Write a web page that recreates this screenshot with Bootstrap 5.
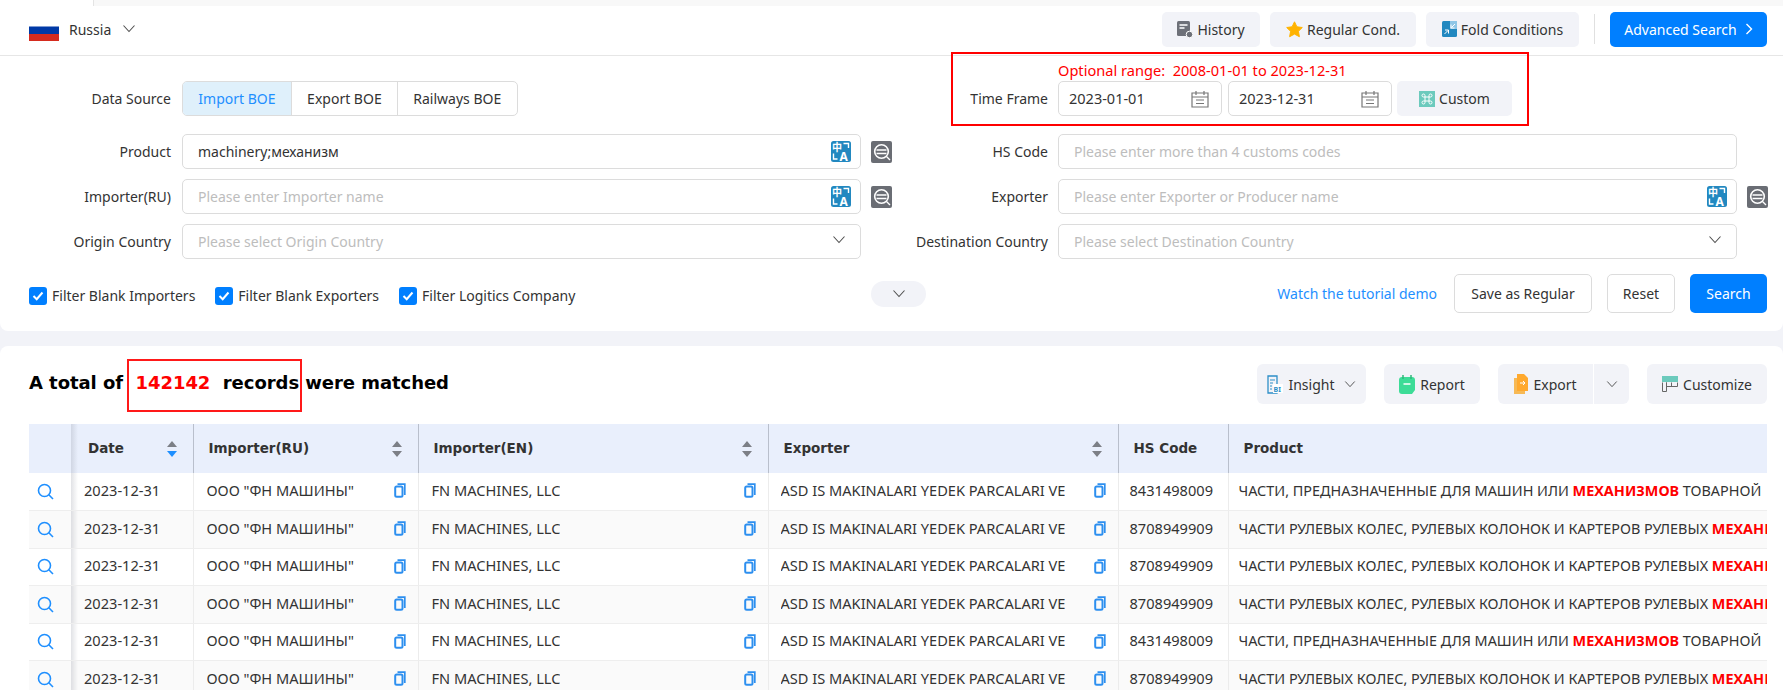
<!DOCTYPE html>
<html lang="en"><head><meta charset="utf-8"><title>Search</title>
<link rel="stylesheet" href="https://cdn.jsdelivr.net/npm/bootstrap@5.3.0/dist/css/bootstrap.min.css">
<style>
html,body{height:690px;overflow:hidden}
body{background:#f2f3f8;font-family:"Noto Sans","Noto Sans CJK SC",sans-serif;font-size:14px;color:#333}
.page-clip{height:690px;overflow:hidden}
.top-strip{height:6px;background:#f8f8f8;margin-left:93px;border-left:1px solid #e4e4e4}
.top-wrap{background:#fff}
.filter-panel{background:#fff;border-radius:0 0 8px 8px;height:331px}
.head-bar{height:50px;border-bottom:1px solid #e6e6e6;padding:0 16px 3px 29px;position:relative}
.flag{width:30px;height:22px;margin-top:1px;flex:none}
.place-name{margin:0 11px 0 10px}
.head-actions{display:flex;align-items:center;gap:10px}
.soft-btn{height:35px;background:#f2f3f8;border:0;border-radius:5px;font-size:14px;color:#333;padding:0;display:inline-flex;align-items:center;justify-content:center;gap:4px}
.w-hist{width:98px}.w-reg{width:146px}.w-fold{width:153px}
.sep-v{width:1px;height:30px;background:#e0e0e0;margin:0 5px}
.adv-btn{width:157px;height:35px;background:#007fff;color:#fff;border:0;border-radius:5px;font-size:14px;display:inline-flex;align-items:center;justify-content:center;gap:8px}
.form-line{display:flex;align-items:flex-end;padding-left:29px;margin-bottom:10px}
.form-first{padding-top:4px;margin-bottom:18px}
.lbl-l{width:142px;text-align:right;margin-right:11px;line-height:35px;flex:none}
.lbl-r{width:156px;text-align:right;margin-right:10px;line-height:35px;flex:none}
.ctl-l{width:679px;flex:none}.ctl-r{width:679px;flex:none}
.fake-input{height:35px;border:1px solid #dcdcdc;border-radius:5px;background:#fff;display:flex;align-items:center;justify-content:space-between;padding:0 9px 0 15px}
.sel-input{padding-right:14px}
.sel-input svg{margin-bottom:3px}
.ph{color:#bdbdbd}
.seg-wrap{display:inline-flex;height:35px;border:1px solid #dcdcdc;border-radius:5px;overflow:hidden}
.seg-item{display:flex;align-items:center;padding:0 15.3px;border-left:1px solid #dcdcdc}
.seg-item:first-child{border-left:0;background:#dff0fb;color:#1e8fff}
.ico-side{width:21px;height:22px;margin-left:10px;flex:none;display:block;align-self:center}
.spacer-side{width:31px;flex:none}
.range-note{color:#f00;line-height:20px;margin-bottom:1px;white-space:pre;font-size:14.6px}
.date-box{width:164px;height:35px;border:1px solid #dcdcdc;border-radius:5px;display:flex;align-items:center;justify-content:space-between;padding:0 12px 0 10px;font-size:14.5px}
.date-box+.date-box{margin-left:6px;padding-left:10px}
.custom-btn{width:115px;margin-left:5px;font-size:14px}
.red-box{position:absolute;left:951px;top:52px;width:578px;height:74px;border:2px solid #f00;pointer-events:none}
.check-row{display:flex;align-items:center;padding:7px 16px 0 29px;height:46px}
.tick{width:18px;height:18px;background:#007fff;border-radius:3px;display:flex;align-items:center;justify-content:center;flex:none;margin-right:5px}
.tick-lab{margin-right:20px}
.fold-pill{position:absolute;left:871px;width:55px;height:26px;background:#f2f3f8;border-radius:13px;display:flex;align-items:center;justify-content:center;margin-bottom:4px}
.tut-link{color:#1e8fff;text-decoration:none;margin-right:17px}
.line-btn{height:39px;border:1px solid #dcdcdc;background:#fff;border-radius:5px;font-size:14px;color:#333;padding:0;margin-right:15px}
.w-save{width:138px}.w-reset{width:68px}
.go-btn{width:77px;height:39px;background:#007fff;color:#fff;border:0;border-radius:5px;font-size:14px}
.result-panel{background:#fff;margin-top:15px;border-radius:8px 8px 0 0;height:344px;padding:13px 16px 0 29px;overflow:hidden}
.res-head{height:65px;position:relative}
.res-title{font-family:"DejaVu Sans",sans-serif;font-weight:700;font-size:18px;color:#000;white-space:pre;margin:13px 0 0;letter-spacing:-.05px}
.num-red{color:#f00}
.anno-box{position:absolute;left:98px;top:0;width:175px;height:53px;border:2px solid #f00;pointer-events:none;opacity:.9}
.tool-group{display:flex;gap:18px;padding-top:5px}
.tool-btn{height:40px;background:#f2f3f8;border:0;border-radius:6px;font-size:14px;color:#333;display:inline-flex;align-items:center;justify-content:center;gap:5px;padding:0}
.w-ins{width:109px}.w-rep{width:96px}.w-exp{width:95px;border-radius:6px 0 0 6px}.w-car{width:35px;margin-left:1px;border-radius:0 6px 6px 0}.w-cus{width:120px}
.data-tbl{table-layout:fixed;width:1738px;border-collapse:collapse;margin:0}
.data-tbl th{height:49px;background:#e9effc;font-family:"DejaVu Sans",sans-serif;font-size:13.5px;font-weight:700;color:#333;padding:0 15px;border-left:1px solid #b9bfcc;vertical-align:middle;white-space:nowrap}
.data-tbl th:first-child,.data-tbl td:first-child{border-left:0;padding:0}
.data-tbl th:nth-child(2){padding-left:17px}
.data-tbl th:nth-child(2),.data-tbl td:nth-child(2){border-left:0;background-image:linear-gradient(90deg,rgba(120,125,140,.22),rgba(120,125,140,0) 7px)}
.data-tbl td{height:37.5px;padding:0 12px 1px 13px;border-left:1px solid #ececec;border-bottom:1px solid #eee;white-space:nowrap;overflow:hidden;vertical-align:middle;font-size:14.6px;color:#333}
.data-tbl td.cell-hs{padding-left:11px}
.data-tbl td.cell-prod{padding:0 0 1px 10px;font-size:14.4px}
.data-tbl td.cell-exp{padding-left:12px}
.data-tbl tbody tr:nth-child(even) td{background-color:#fafafa}
.th-in{display:flex;align-items:center;justify-content:space-between}
.td-in{display:flex;align-items:center;justify-content:space-between;gap:6px}
.td-txt{overflow:hidden;white-space:nowrap}
.hit{color:#f00;font-weight:700}
.sort-ico{width:12px;height:18px;flex:none}
.mag-cell{display:flex;justify-content:flex-start;padding-left:8px}
</style></head>
<body>
<svg width="0" height="0" class="position-absolute">
<defs>
<symbol id="cal" viewBox="0 0 18 18"><path d="M1 3h16v14H1zM1 7h16M5 1v4M13 1v4M5 10h8M5 13.500h8" fill="none" stroke="#777" stroke-width="1.200"/></symbol>
<symbol id="chev" viewBox="0 0 14 10"><path d="M1.500 1.500 7 7.500l5.500-6" fill="none" stroke="#4f4f4f" stroke-width="1.100"/></symbol>
<symbol id="trans" viewBox="0 0 20 21"><rect width="20" height="21" rx="2.500" fill="#2288c0"/><text x="1" y="10" font-size="10" font-weight="700" fill="#fff" font-family="Noto Sans CJK SC">中</text><text x="8.500" y="19.500" font-size="12" font-weight="700" fill="#fff" font-family="Noto Sans">A</text><path d="M12.500 2.500h5v4.500M2.500 12.500v5.500h4" fill="none" stroke="#fff" stroke-width="1.400"/></symbol>
<symbol id="sq" viewBox="0 0 21 22"><rect width="21" height="22" rx="2" fill="#6a6d74"/><circle cx="10.500" cy="10.500" r="6.800" fill="none" stroke="#fff" stroke-width="1.600"/><path d="M5.500 9h10M5.500 12.500h10M15.500 15.500l3.500 3.500" stroke="#fff" stroke-width="1.400" fill="none"/></symbol>
<symbol id="copy" viewBox="0 0 12 15"><path d="M3.500 1.200h7.300V12" fill="none" stroke="#2d8fef" stroke-width="1.700"/><rect x="1.200" y="3.500" width="7.300" height="10.300" rx="1.500" fill="none" stroke="#2d8fef" stroke-width="2"/></symbol>
<symbol id="mag" viewBox="0 0 17 17"><circle cx="7.500" cy="7.500" r="6" fill="none" stroke="#1e8fff" stroke-width="1.600"/><path d="M11.800 11.800l4.200 4.200" stroke="#1e8fff" stroke-width="1.600"/></symbol>
<symbol id="sortg" viewBox="0 0 12 18"><path d="M6 1l5 6H1zM6 17l5-6H1z" fill="#7c7f86"/></symbol>
<symbol id="sortb" viewBox="0 0 12 18"><path d="M6 1l5 6H1z" fill="#7c7f86"/><path d="M6 17l5-6H1z" fill="#1e8fff"/></symbol>
<symbol id="ok" viewBox="0 0 12 10"><path d="M1.500 5l3.200 3.200L10.500 1.500" fill="none" stroke="#fff" stroke-width="2"/></symbol>
</defs>
</svg>
<div class="page-clip position-relative">
<div class="filter-panel position-relative">
  <div class="top-wrap"><div class="top-strip"></div></div>
  <div class="head-bar d-flex align-items-center justify-content-between">
    <div class="d-flex align-items-center">
      <svg class="flag" viewBox="0 0 30 22"><rect width="30" height="7.500" fill="#fff"/><rect y="7.500" width="30" height="7.500" fill="#0039a6"/><rect y="15" width="30" height="7" fill="#d52b1e"/></svg>
      <span class="place-name">Russia</span>
      <svg width="14" height="10"><use href="#chev"/></svg>
    </div>
    <div class="head-actions">
      <button class="soft-btn w-hist"><svg width="16" height="17" viewBox="0 0 16 17"><rect width="13" height="15" rx="1.500" fill="#6d7078"/><path d="M2.500 4h8M2.500 7h5" stroke="#fff" stroke-width="1.300"/><circle cx="12.500" cy="13.500" r="3.300" fill="#6d7078" stroke="#fff"/></svg>History</button>
      <button class="soft-btn w-reg"><svg width="17" height="17" viewBox="0 0 17 17"><path d="M8.500.8l2.400 5 5.400.7-3.900 3.800 1 5.400-4.900-2.600-4.900 2.600 1-5.400L.7 6.500l5.400-.7z" fill="#ffb300" stroke="#ffb300" stroke-linejoin="round"/></svg>Regular Cond.</button>
      <button class="soft-btn w-fold"><svg width="15" height="16" viewBox="0 0 15 16"><rect width="15" height="16" rx="1.500" fill="#2288c0"/><rect x="8" width="7" height="8" fill="#8fc6e6"/><path d="M2.500 13l3.500-3.500M3 9h3.500v3.500M13 3L9.500 6.500M9 3.500V7h3.500" fill="none" stroke="#fff"/></svg>Fold Conditions</button>
      <span class="sep-v"></span>
      <button class="adv-btn">Advanced Search<svg width="8" height="12" viewBox="0 0 8 12"><path d="M1.500 1l5 5-5 5" fill="none" stroke="#fff" stroke-width="1.400"/></svg></button>
    </div>
  </div>

  <div class="form-line form-first">
    <span class="lbl-l">Data Source</span>
    <div class="ctl-l"><div class="seg-wrap"><span class="seg-item">Import BOE</span><span class="seg-item">Export BOE</span><span class="seg-item">Railways BOE</span></div></div>
    <span class="spacer-side"></span>
    <span class="lbl-r">Time Frame</span>
    <div class="ctl-r">
      <div class="range-note">Optional range:  2008-01-01 to 2023-12-31</div>
      <div class="d-flex">
        <div class="date-box"><span>2023-01-01</span><svg width="18" height="18"><use href="#cal"/></svg></div>
        <div class="date-box"><span>2023-12-31</span><svg width="18" height="18"><use href="#cal"/></svg></div>
        <button class="soft-btn custom-btn"><svg width="16" height="16" viewBox="0 0 16 16"><rect width="16" height="16" fill="#6ccabd"/><path d="M6 6h4v4H6zM6 6H4.500A1.500 1.500 0 1 1 6 4.500zM10 6V4.500A1.500 1.500 0 1 1 11.500 6zM10 10h1.500A1.500 1.500 0 1 1 10 11.500zM6 10v1.500A1.500 1.500 0 1 1 4.500 10z" fill="none" stroke="#fff"/></svg>Custom</button>
      </div>
    </div>
  </div>

  <div class="form-line">
    <span class="lbl-l">Product</span>
    <div class="ctl-l fake-input"><span>machinery;механизм</span><svg width="20" height="21"><use href="#trans"/></svg></div>
    <svg class="ico-side"><use href="#sq"/></svg>
    <span class="lbl-r">HS Code</span>
    <div class="ctl-r fake-input"><span class="ph">Please enter more than 4 customs codes</span></div>
  </div>
  <div class="form-line">
    <span class="lbl-l">Importer(RU)</span>
    <div class="ctl-l fake-input"><span class="ph">Please enter Importer name</span><svg width="20" height="21"><use href="#trans"/></svg></div>
    <svg class="ico-side"><use href="#sq"/></svg>
    <span class="lbl-r">Exporter</span>
    <div class="ctl-r fake-input"><span class="ph">Please enter Exporter or Producer name</span><svg width="20" height="21"><use href="#trans"/></svg></div>
    <svg class="ico-side"><use href="#sq"/></svg>
  </div>
  <div class="form-line">
    <span class="lbl-l">Origin Country</span>
    <div class="ctl-l fake-input sel-input"><span class="ph">Please select Origin Country</span><svg width="14" height="10"><use href="#chev"/></svg></div>
    <span class="spacer-side"></span>
    <span class="lbl-r">Destination Country</span>
    <div class="ctl-r fake-input sel-input"><span class="ph">Please select Destination Country</span><svg width="14" height="10"><use href="#chev"/></svg></div>
  </div>

  <div class="check-row">
    <span class="tick"><svg width="12" height="10"><use href="#ok"/></svg></span><span class="tick-lab">Filter Blank Importers</span>
    <span class="tick"><svg width="12" height="10"><use href="#ok"/></svg></span><span class="tick-lab">Filter Blank Exporters</span>
    <span class="tick"><svg width="12" height="10"><use href="#ok"/></svg></span><span class="tick-lab">Filter Logitics Company</span>
    <span class="fold-pill"><svg width="14" height="10"><use href="#chev"/></svg></span>
    <div class="ms-auto d-flex align-items-center mb-1">
      <a class="tut-link" href="#">Watch the tutorial demo</a>
      <button class="line-btn w-save">Save as Regular</button>
      <button class="line-btn w-reset">Reset</button>
      <button class="go-btn">Search</button>
    </div>
  </div>
  <div class="red-box"></div>
</div>

<div class="result-panel">
  <div class="res-head d-flex justify-content-between">
    <h2 class="res-title">A total of  <span class="num-red">142142</span>  records were matched</h2>
    <div class="anno-box"></div>
    <div class="tool-group">
      <button class="tool-btn w-ins"><svg width="16" height="19" viewBox="0 0 16 19"><path d="M1 1h9v17H1z" fill="none" stroke="#2d8fc7" stroke-width="1.300"/><path d="M3 5h5M3 8h3M3 11h2M3 14h2" stroke="#2d8fc7"/><rect x="6" y="9" width="10" height="9" fill="#fff"/><text x="6.500" y="17" font-size="7" font-weight="700" fill="#2d8fc7" font-family="Noto Sans">BI</text></svg>Insight<svg class="ms-1" width="12" height="9"><use href="#chev"/></svg></button>
      <button class="tool-btn w-rep"><svg width="16" height="19" viewBox="0 0 16 19"><path d="M3 2h10a3 3 0 0 1 3 3v10l-3 4H3a3 3 0 0 1-3-3V5a3 3 0 0 1 3-3z" fill="#3ddc97"/><path d="M4 0v4M12 0v4" stroke="#2cb87a" stroke-width="1.500"/><path d="M4.500 9h7" stroke="#fff" stroke-width="1.500"/></svg>Report</button>
      <div class="d-flex">
        <button class="tool-btn w-exp"><svg width="14" height="20" viewBox="0 0 14 20"><path d="M0 4h3v13h8v3H0z" fill="#f7b955"/><path d="M3 0h7l4 4v13H3z" fill="#ffa92e"/><path d="M6 9h5M9 7l2 2-2 2" stroke="#fff" fill="none"/></svg>Export</button>
        <button class="tool-btn w-car"><svg width="12" height="9"><use href="#chev"/></svg></button>
      </div>
      <button class="tool-btn w-cus"><svg width="16" height="16" viewBox="0 0 16 16"><rect width="16" height="6" fill="#6ccabd"/><path d="M.5 6.500v9h4v-9M4.500 6.500v4h11v-4M9.500 6.500v4" fill="none" stroke="#666"/></svg>Customize</button>
    </div>
  </div>
  <table class="data-tbl">
    <colgroup><col style="width:42px"><col style="width:122px"><col style="width:225px"><col style="width:350px"><col style="width:350px"><col style="width:110px"><col></colgroup>
    <thead><tr>
      <th></th>
      <th><div class="th-in"><span>Date</span><svg class="sort-ico"><use href="#sortb"/></svg></div></th>
      <th><div class="th-in"><span>Importer(RU)</span><svg class="sort-ico"><use href="#sortg"/></svg></div></th>
      <th><div class="th-in"><span>Importer(EN)</span><svg class="sort-ico"><use href="#sortg"/></svg></div></th>
      <th><div class="th-in"><span>Exporter</span><svg class="sort-ico"><use href="#sortg"/></svg></div></th>
      <th>HS Code</th>
      <th>Product</th>
    </tr></thead>
    <tbody>
      <tr><td><div class="mag-cell"><svg width="17" height="17"><use href="#mag"/></svg></div></td><td>2023-12-31</td><td><div class="td-in"><span class="td-txt">ООО "ФН МАШИНЫ"</span><svg width="12" height="15"><use href="#copy"/></svg></div></td><td><div class="td-in"><span class="td-txt">FN MACHINES, LLC</span><svg width="12" height="15"><use href="#copy"/></svg></div></td><td class="cell-exp"><div class="td-in"><span class="td-txt">ASD IS MAKINALARI YEDEK PARCALARI VE</span><svg width="12" height="15"><use href="#copy"/></svg></div></td><td class="cell-hs">8431498009</td><td class="cell-prod">ЧАСТИ, ПРЕДНАЗНАЧЕННЫЕ ДЛЯ МАШИН ИЛИ <span class="hit">МЕХАНИЗМОВ</span> ТОВАРНОЙ</td></tr>
      <tr><td><div class="mag-cell"><svg width="17" height="17"><use href="#mag"/></svg></div></td><td>2023-12-31</td><td><div class="td-in"><span class="td-txt">ООО "ФН МАШИНЫ"</span><svg width="12" height="15"><use href="#copy"/></svg></div></td><td><div class="td-in"><span class="td-txt">FN MACHINES, LLC</span><svg width="12" height="15"><use href="#copy"/></svg></div></td><td class="cell-exp"><div class="td-in"><span class="td-txt">ASD IS MAKINALARI YEDEK PARCALARI VE</span><svg width="12" height="15"><use href="#copy"/></svg></div></td><td class="cell-hs">8708949909</td><td class="cell-prod">ЧАСТИ РУЛЕВЫХ КОЛЕС, РУЛЕВЫХ КОЛОНОК И КАРТЕРОВ РУЛЕВЫХ <span class="hit">МЕХАНИ</span></td></tr>
      <tr><td><div class="mag-cell"><svg width="17" height="17"><use href="#mag"/></svg></div></td><td>2023-12-31</td><td><div class="td-in"><span class="td-txt">ООО "ФН МАШИНЫ"</span><svg width="12" height="15"><use href="#copy"/></svg></div></td><td><div class="td-in"><span class="td-txt">FN MACHINES, LLC</span><svg width="12" height="15"><use href="#copy"/></svg></div></td><td class="cell-exp"><div class="td-in"><span class="td-txt">ASD IS MAKINALARI YEDEK PARCALARI VE</span><svg width="12" height="15"><use href="#copy"/></svg></div></td><td class="cell-hs">8708949909</td><td class="cell-prod">ЧАСТИ РУЛЕВЫХ КОЛЕС, РУЛЕВЫХ КОЛОНОК И КАРТЕРОВ РУЛЕВЫХ <span class="hit">МЕХАНИ</span></td></tr>
      <tr><td><div class="mag-cell"><svg width="17" height="17"><use href="#mag"/></svg></div></td><td>2023-12-31</td><td><div class="td-in"><span class="td-txt">ООО "ФН МАШИНЫ"</span><svg width="12" height="15"><use href="#copy"/></svg></div></td><td><div class="td-in"><span class="td-txt">FN MACHINES, LLC</span><svg width="12" height="15"><use href="#copy"/></svg></div></td><td class="cell-exp"><div class="td-in"><span class="td-txt">ASD IS MAKINALARI YEDEK PARCALARI VE</span><svg width="12" height="15"><use href="#copy"/></svg></div></td><td class="cell-hs">8708949909</td><td class="cell-prod">ЧАСТИ РУЛЕВЫХ КОЛЕС, РУЛЕВЫХ КОЛОНОК И КАРТЕРОВ РУЛЕВЫХ <span class="hit">МЕХАНИ</span></td></tr>
      <tr><td><div class="mag-cell"><svg width="17" height="17"><use href="#mag"/></svg></div></td><td>2023-12-31</td><td><div class="td-in"><span class="td-txt">ООО "ФН МАШИНЫ"</span><svg width="12" height="15"><use href="#copy"/></svg></div></td><td><div class="td-in"><span class="td-txt">FN MACHINES, LLC</span><svg width="12" height="15"><use href="#copy"/></svg></div></td><td class="cell-exp"><div class="td-in"><span class="td-txt">ASD IS MAKINALARI YEDEK PARCALARI VE</span><svg width="12" height="15"><use href="#copy"/></svg></div></td><td class="cell-hs">8431498009</td><td class="cell-prod">ЧАСТИ, ПРЕДНАЗНАЧЕННЫЕ ДЛЯ МАШИН ИЛИ <span class="hit">МЕХАНИЗМОВ</span> ТОВАРНОЙ</td></tr>
      <tr><td><div class="mag-cell"><svg width="17" height="17"><use href="#mag"/></svg></div></td><td>2023-12-31</td><td><div class="td-in"><span class="td-txt">ООО "ФН МАШИНЫ"</span><svg width="12" height="15"><use href="#copy"/></svg></div></td><td><div class="td-in"><span class="td-txt">FN MACHINES, LLC</span><svg width="12" height="15"><use href="#copy"/></svg></div></td><td class="cell-exp"><div class="td-in"><span class="td-txt">ASD IS MAKINALARI YEDEK PARCALARI VE</span><svg width="12" height="15"><use href="#copy"/></svg></div></td><td class="cell-hs">8708949909</td><td class="cell-prod">ЧАСТИ РУЛЕВЫХ КОЛЕС, РУЛЕВЫХ КОЛОНОК И КАРТЕРОВ РУЛЕВЫХ <span class="hit">МЕХАНИ</span></td></tr>
    </tbody>
  </table>
</div>
</div>
<script src="https://cdn.jsdelivr.net/npm/bootstrap@5.3.0/dist/js/bootstrap.bundle.min.js"></script>
</body></html>
